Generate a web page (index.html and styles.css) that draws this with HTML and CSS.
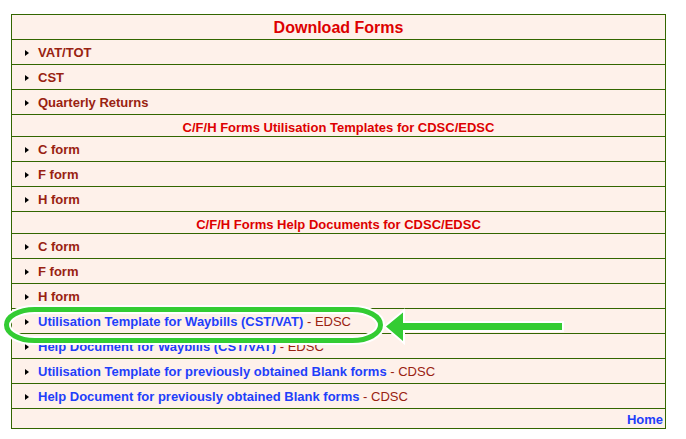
FILE: index.html
```html
<!DOCTYPE html>
<html>
<head>
<meta charset="utf-8">
<link rel="stylesheet" href="styles.css">
</head>
<body>
<div class="page">
  <div class="forms">
    <div class="row title">Download Forms</div>
    <div class="row item"><span class="tri"></span><a class="lnk red">VAT/TOT</a></div>
    <div class="row item"><span class="tri"></span><a class="lnk red">CST</a></div>
    <div class="row item"><span class="tri"></span><a class="lnk red">Quarterly Returns</a></div>
    <div class="row head">C/F/H Forms Utilisation Templates for CDSC/EDSC</div>
    <div class="row item"><span class="tri"></span><a class="lnk red">C form</a></div>
    <div class="row item"><span class="tri"></span><a class="lnk red">F form</a></div>
    <div class="row item"><span class="tri"></span><a class="lnk red">H form</a></div>
    <div class="row head">C/F/H Forms Help Documents for CDSC/EDSC</div>
    <div class="row item"><span class="tri"></span><a class="lnk red">C form</a></div>
    <div class="row item"><span class="tri"></span><a class="lnk red">F form</a></div>
    <div class="row item"><span class="tri"></span><a class="lnk red">H form</a></div>
    <div class="row item"><span class="tri"></span><a class="lnk blue">Utilisation Template for Waybills (CST/VAT)</a><span class="suffix">&nbsp;- EDSC</span></div>
    <div class="row item"><span class="tri"></span><a class="lnk blue">Help Document for Waybills (CST/VAT)</a><span class="suffix">&nbsp;- EDSC</span></div>
    <div class="row item"><span class="tri"></span><a class="lnk blue">Utilisation Template for previously obtained Blank forms</a><span class="suffix">&nbsp;- CDSC</span></div>
    <div class="row item"><span class="tri"></span><a class="lnk blue">Help Document for previously obtained Blank forms</a><span class="suffix">&nbsp;- CDSC</span></div>
    <div class="row home"><a class="lnk blue">Home</a></div>
  </div>
  <svg class="annot" width="686" height="439" viewBox="0 0 686 439">
    <rect x="6.5" y="309.5" width="374" height="31" rx="28" ry="15.5" fill="none" stroke="#ffffff" stroke-width="9"/>
    <rect x="6.5" y="309.5" width="374" height="31" rx="28" ry="15.5" fill="none" stroke="#33cc33" stroke-width="5"/>
    <polygon points="386,326.5 403,312.5 403,323 562,323 562,330 403,330 403,341" fill="#33cc33" stroke="#ffffff" stroke-width="4" stroke-linejoin="miter" paint-order="stroke"/>
  </svg>
</div>
</body>
</html>
```

FILE: styles.css
```css
html, body {
  margin: 0;
  padding: 0;
  background: #ffffff;
}

.page {
  position: relative;
  width: 686px;
  height: 439px;
  padding: 14px 0 0 11px;
  box-sizing: border-box;
  font-family: "Liberation Sans", Arial, sans-serif;
}

.forms {
  width: 655px;
  border: 1px solid #336600;
  border-bottom: none;
  background: #fef1ea;
  box-sizing: border-box;
  display: flex;
  flex-direction: column;
}

.row {
  border-bottom: 1px solid #336600;
  display: flex;
  align-items: center;
  box-sizing: border-box;
}

.title {
  height: 25px;
  justify-content: center;
  color: #dd0000;
  font-weight: bold;
  font-size: 16px;
  padding-top: 1px;
}

.head {
  height: 22px;
  justify-content: center;
  color: #dd0000;
  font-weight: bold;
  font-size: 13px;
  padding-top: 3px;
}

.item {
  height: 25px;
  padding-left: 13px;
  font-size: 13px;
}

.tri {
  width: 0;
  height: 0;
  border-left: 4px solid #000000;
  border-top: 3px solid transparent;
  border-bottom: 3px solid transparent;
  margin-right: 9px;
  margin-top: 1px;
}

.lnk {
  font-weight: bold;
  text-decoration: none;
}

.red {
  color: #992211;
}

.blue {
  color: #1f3ffa;
}

.suffix {
  color: #992211;
  font-size: 13px;
}

.home {
  height: 20px;
  justify-content: flex-end;
  padding-right: 2px;
  font-size: 13px;
  padding-top: 2px;
}

.annot {
  position: absolute;
  left: 0;
  top: 0;
  pointer-events: none;
}
```
